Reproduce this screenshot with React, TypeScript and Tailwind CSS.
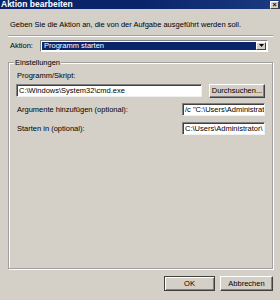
import React from "react";

const font = { fontFamily: '"Liberation Sans", Arial, sans-serif' };

const Field: React.FC<{ value: string; className: string }> = ({ value, className }) => (
  <div
    className={`h-[13px] bg-white border border-t-[#808080] border-l-[#808080] border-b-[#f0f0f0] border-r-[#f0f0f0] shadow-[inset_1px_1px_0_#404040] overflow-hidden whitespace-nowrap text-[7.5px] leading-[11px] pl-[2px] text-black ${className}`}
  >
    {value}
  </div>
);

const Button: React.FC<{ label: string; className: string; def?: boolean }> = ({ label, className, def }) => (
  <div
    className={`flex items-center justify-center bg-[#d4d0c8] text-[7.5px] text-black border ${
      def
        ? "border-[#404040] shadow-[inset_1px_1px_0_#fff,inset_-1px_-1px_0_#808080]"
        : "border-t-white border-l-white border-b-[#404040] border-r-[#404040] shadow-[inset_-1px_-1px_0_#808080]"
    } ${className}`}
  >
    {label}
  </div>
);

export default function App() {
  return (
    <div className="w-[280px] h-[300px] bg-[#d4d0c8] flex flex-col overflow-hidden text-black" style={font}>
      {/* title bar */}
      <div className="h-[9px] bg-gradient-to-r from-[#0a246a] via-[#0a246a] to-[#1b3a80] flex items-center justify-between pl-[1px] pr-[1px]">
        <span className="text-white font-bold text-[8.5px] leading-[9px]">Aktion bearbeiten</span>
        <div className="w-[9px] h-[8px] bg-[#d4d0c8] border border-t-white border-l-white border-b-[#404040] border-r-[#404040] flex items-center justify-center text-[7px] leading-[6px] font-bold">
          ×
        </div>
      </div>

      <div className="mt-[11px] pl-[10px] text-[7.5px] leading-[9px] whitespace-nowrap">
        Geben Sie die Aktion an, die von der Aufgabe ausgeführt werden soll.
      </div>

      {/* separator */}
      <div className="mt-[6px] ml-[8px] mr-[7px] h-[2px] border-t border-[#a0a0a0] border-b border-b-white" />

      {/* Aktion row */}
      <div className="mt-[3px] flex items-center h-[11px]">
        <span className="w-[40px] pl-[10px] text-[7.5px] leading-[9px]">Aktion:</span>
        <div className="w-[228px] h-[12px] bg-white border border-t-[#808080] border-l-[#808080] border-b-white border-r-white flex items-stretch p-[1px]">
          <div className="flex-1 bg-[#0a246a] text-white text-[7.5px] leading-[8px] pl-[2px] flex items-center">
            Programm starten
          </div>
          <div className="w-[10px] bg-[#d4d0c8] border border-t-white border-l-white border-b-[#404040] border-r-[#404040] flex items-center justify-center">
            <svg width="5" height="3" viewBox="0 0 5 3">
              <path d="M0 0h5L2.5 3z" fill="#000" />
            </svg>
          </div>
        </div>
      </div>

      {/* group box */}
      <div className="mt-[11px] ml-[8px] mr-[7px] h-[207px] border border-[#a0a0a0] shadow-[inset_1px_1px_0_#fff,1px_1px_0_#fff] flex flex-col">
        <span className="-mt-[5px] ml-[5px] w-fit px-[1px] bg-[#d4d0c8] text-[7.5px] leading-[9px]">Einstellungen</span>

        <span className="mt-[4px] ml-[8px] text-[7.5px] leading-[9px]">Programm/Skript:</span>
        <div className="mt-[4px] ml-[7px] flex items-start">
          <Field value="C:\Windows\System32\cmd.exe" className="w-[186px]" />
          <Button label="Durchsuchen..." className="ml-[7px] w-[56px] h-[14px]" />
        </div>

        <div className="mt-[5px] flex items-center">
          <span className="w-[173px] pl-[8px] text-[7.5px] leading-[9px]">Argumente hinzufügen (optional):</span>
          <Field value='/c "C:\Users\Administrat' className="w-[83px]" />
        </div>

        <div className="mt-[6px] flex items-center">
          <span className="w-[173px] pl-[8px] text-[7.5px] leading-[9px]">Starten in (optional):</span>
          <Field value="C:\Users\Administrator\" className="w-[83px]" />
        </div>
      </div>

      {/* buttons */}
      <div className="mt-[7px] flex justify-end pr-[7px] gap-[5px]">
        <Button label="OK" def className="w-[51px] h-[15px]" />
        <Button label="Abbrechen" className="w-[53px] h-[15px]" />
      </div>
    </div>
  );
}
